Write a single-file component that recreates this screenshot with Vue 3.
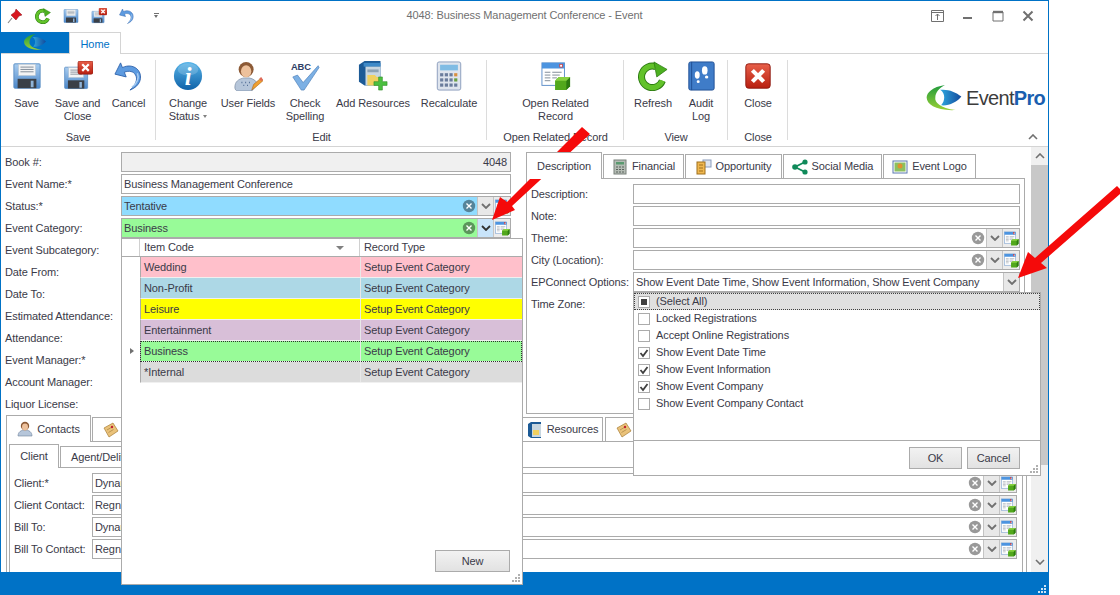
<template>
  <div class="app">
    <svg class="sprite" aria-hidden="true">
      <defs>
        <linearGradient id="gBlue" x1="0" y1="0" x2="0" y2="1"><stop offset="0" stop-color="#a9cdf0" /><stop offset="1" stop-color="#4a86c8" /></linearGradient>
        <linearGradient id="gInfo" x1="0" y1="0" x2="0" y2="1"><stop offset="0" stop-color="#58b4e8" /><stop offset="1" stop-color="#0f62a8" /></linearGradient>
        <linearGradient id="gGreen" x1="0" y1="0" x2="0" y2="1"><stop offset="0" stop-color="#1f9a3c" /><stop offset="1" stop-color="#9ad035" /></linearGradient>
        <linearGradient id="gLens" x1="0" y1="0" x2="1" y2="0"><stop offset="0" stop-color="#2fa8e0" /><stop offset="1" stop-color="#124a9c" /></linearGradient>
        <linearGradient id="gRed" x1="0" y1="0" x2="0" y2="1"><stop offset="0" stop-color="#e8604a" /><stop offset="1" stop-color="#b81f10" /></linearGradient>
      </defs>
      <symbol id="i-save" viewBox="0 0 32 32">
        <path d="M3 3h26a1 1 0 0 1 1 1v24a1 1 0 0 1-1 1H3a1 1 0 0 1-1-1V4a1 1 0 0 1 1-1z" fill="url(#gBlue)" stroke="#5b8fc4" />
        <rect x="7" y="3.500" width="18" height="12" fill="#f4f4f4" stroke="#b8c4d0" stroke-width=".6" />
        <path d="M9 6.500h14M9 9h14M9 11.500h14" stroke="#7c8894" />
        <rect x="6" y="19" width="20" height="10" fill="#3a3f46" />
        <rect x="20" y="21" width="3" height="7" fill="#8fb4d8" />
      </symbol>
      <symbol id="i-save-x" viewBox="0 0 32 32">
        <use href="#i-save" width="28" height="28" y="4" />
        <rect x="16" y="0" width="16" height="14" rx="2" fill="url(#gRed)" stroke="#8e1a10" stroke-width=".7" />
        <path d="M20.500 3.500l7 7M27.500 3.500l-7 7" stroke="#fff" stroke-width="2.400" />
      </symbol>
      <symbol id="i-undo" viewBox="0 0 32 32">
        <path d="M17 31C28 27 31 17 26 10 22 5 15 4 9 7L7 2 1 14l12 3-2-5c5-2 10-1 12 3 3 5-1 12-6 16z" fill="#5d9be0" stroke="#2a5ea8" stroke-width=".9" />
        <path d="M19 28c6-4 8-10 6-15" stroke="#a9cdf2" stroke-width="1.600" fill="none" />
      </symbol>
      <symbol id="i-refresh" viewBox="0 0 32 32">
        <path d="M26 21A11.500 11.500 0 1 1 19 6" fill="none" stroke="#2c7a12" stroke-width="7.500" />
        <path d="M26 21A11.500 11.500 0 1 1 19 6" fill="none" stroke="#62c22a" stroke-width="5.500" />
        <path d="M17 1l14 8-11 8z" fill="#4cb020" stroke="#2c7a12" stroke-width=".8" />
      </symbol>
      <symbol id="i-info" viewBox="0 0 32 32">
        <circle cx="16" cy="16" r="15" fill="url(#gInfo)" />
        <ellipse cx="16" cy="9" rx="11" ry="6.500" fill="#fff" opacity=".18" />
      </symbol>
      <symbol id="i-user" viewBox="0 0 32 32">
        <path d="M2 28c0-6 4-9 10-10h5c5 1 8 3 9 7l-6 7H5c-2 0-3-2-3-4z" fill="#b6c6da" stroke="#71839c" stroke-width=".7" />
        <circle cx="14" cy="9" r="8" fill="#8c5a36" />
        <ellipse cx="14" cy="11" rx="5.500" ry="6.500" fill="#edc19c" />
        <path d="M9 23h1M13 23h1M17 23h1M11 26h1M15 26h1" stroke="#4e6a92" stroke-width="1.500" />
        <path d="M20 31l2-6 8-7 2 3-8 7z" fill="#f0a030" stroke="#a86418" stroke-width=".6" />
        <path d="M28 19l2-2 2 3-2 1.500z" fill="#e06a5a" />
      </symbol>
      <symbol id="i-spell" viewBox="0 0 32 32">
        <path d="M3 17l5-2 6 8L30 5l1 2-16 24h-3z" fill="#7cb0e4" stroke="#4d7fb8" stroke-width=".7" />
      </symbol>
      <symbol id="i-res" viewBox="0 0 32 32">
        <path d="M1 4l6-4h17v26H7l-6-4z" fill="#1c5a96" />
        <path d="M6 2h18v4H6z" fill="#3e8ac8" />
        <rect x="8" y="6" width="16" height="20" fill="#c8d6e0" />
        <rect x="10" y="9" width="12" height="3" fill="#8ca2b4" />
        <path d="M10 15h8l2 2h3v9H10z" fill="#f0d060" />
        <path d="M22 17h4v5h5v4h-5v5h-4v-5h-5v-4h5z" fill="#4cc040" stroke="#2a8a22" stroke-width=".6" />
      </symbol>
      <symbol id="i-calc" viewBox="0 0 32 32">
        <rect x="3.500" y="1" width="25" height="30" rx="2" fill="#dfe5ee" stroke="#8a9cbc" />
        <rect x="6.500" y="4" width="19" height="6" fill="#80bce4" />
        <rect v-for="k in calcKeys" :key="k.id" :x="k.x" :y="k.y" width="3.400" height="3.400" :fill="k.fill" />
      </symbol>
      <symbol id="i-open" viewBox="0 0 32 32">
        <rect x="1" y="2" width="24" height="24" fill="#fff" stroke="#5a8cc8" />
        <rect x="1" y="2" width="24" height="6" fill="#4c94e0" />
        <rect x="20" y="3.500" width="3" height="3" fill="#fff" stroke="#d03030" stroke-width=".8" />
        <path d="M4 12h6M12 12h10M4 15h6M12 15h8M4 18h6M12 18h5M4 21h6" stroke="#7c8894" />
        <path d="M15 21l4-4h12v10l-4 4H15z" fill="#52a81c" />
        <path d="M27 21v10l4-4V17z" fill="#2c7a10" />
        <path d="M15 21l4-4h12l-4 4z" fill="#86d040" />
      </symbol>
      <symbol id="i-book" viewBox="0 0 32 32">
        <rect x="3" y="1" width="27" height="30" rx="2" fill="#3f7cc8" stroke="#1f4f94" />
        <path d="M6 1v30" stroke="#1f4f94" />
        <ellipse cx="20" cy="10" rx="3" ry="4.500" fill="#fff" />
        <ellipse cx="12" cy="15" rx="2.600" ry="4" fill="#fff" />
        <ellipse cx="22" cy="17" rx="1.800" ry="1.600" fill="#fff" />
        <ellipse cx="13" cy="22" rx="1.600" ry="1.500" fill="#fff" />
      </symbol>
      <symbol id="i-close" viewBox="0 0 32 32">
        <rect x="3" y="3" width="26" height="26" rx="3" fill="url(#gRed)" stroke="#8e1a10" />
        <path d="M10 10l12 12M22 10L10 22" stroke="#fff" stroke-width="4.500" />
      </symbol>
      <symbol id="i-swoosh" viewBox="0 0 36 28">
        <path d="M19 0C6 2 0 8 0 13c0 7 10 14 30 13C14 24 8 18 9 13 9 8 13 3 19 0z" fill="url(#gGreen)" />
        <path d="M14 5c8-1 16 2 22 7-4 6-14 10-21 9 4-4 5-12-1-16z" fill="url(#gLens)" />
      </symbol>
      <symbol id="i-pin" viewBox="0 0 16 16">
        <path d="M9 1l6 6-3 1-3 4-5-5 4-3z" fill="#d81820" stroke="#90101a" stroke-width=".5" />
        <path d="M5 10l-4 5" stroke="#8a8a8a" stroke-width="1.200" />
      </symbol>
      <symbol id="i-note" viewBox="0 0 16 16">
        <path d="M1 6l9-5 5 8-9 6z" fill="#eac27a" stroke="#a87c34" stroke-width=".7" />
        <path d="M4 8l5-3M5.500 10.500l5-3" stroke="#b08a48" stroke-width=".8" />
        <circle cx="9" cy="5" r="1.200" fill="#c02030" />
      </symbol>
      <symbol id="i-fin" viewBox="0 0 16 16">
        <rect x="2" y="1" width="12" height="14" fill="#b4bcb4" stroke="#78807a" />
        <rect x="4" y="3" width="8" height="2.500" fill="#5a9a70" />
        <path d="M4 8h2M7 8h2M10 8h2M4 10.500h2M7 10.500h2M10 10.500h2M4 13h2M7 13h2M10 13h2" stroke="#5a625c" />
      </symbol>
      <symbol id="i-opp" viewBox="0 0 16 16">
        <rect x="7" y="1" width="8" height="7" fill="#dfe5ee" stroke="#8a9cbc" />
        <rect x="1" y="3" width="8" height="12" fill="#f0b850" stroke="#a0701c" />
        <path d="M3 6h4M3 9h4M3 12h4" stroke="#a0701c" />
      </symbol>
      <symbol id="i-share" viewBox="0 0 16 16">
        <path d="M13 3L3 8l10 5" fill="none" stroke="#0f8a5a" stroke-width="1.800" />
        <circle cx="13" cy="3" r="2.600" fill="#0f8a5a" />
        <circle cx="3" cy="8" r="2.800" fill="#0f8a5a" />
        <circle cx="13" cy="13" r="2.600" fill="#0f8a5a" />
      </symbol>
      <symbol id="i-pic" viewBox="0 0 16 16">
        <rect x="1" y="2" width="14" height="12" fill="#fff" stroke="#5a78b0" />
        <rect x="2.500" y="3.500" width="11" height="9" fill="#8cc060" />
        <circle cx="8" cy="7" r="2.500" fill="#e09030" />
      </symbol>
      <symbol id="i-contact" viewBox="0 0 16 16">
        <path d="M1 15c0-4 3-6 7-6s7 2 7 6z" fill="#b6c6da" stroke="#71839c" stroke-width=".6" />
        <circle cx="8" cy="5" r="4.200" fill="#8c5a36" />
        <ellipse cx="8" cy="6" rx="3" ry="3.400" fill="#edc19c" />
      </symbol>
      <symbol id="i-resmall" viewBox="0 0 16 16">
        <path d="M1 2l3-2h10v16H4l-3-2z" fill="#1c5a96" />
        <rect x="5" y="2" width="9" height="13" fill="#c8d6e0" />
        <path d="M6 8h6v5H6z" fill="#f0d060" />
      </symbol>
      <symbol id="i-clear" viewBox="0 0 14 14">
        <circle cx="7" cy="7" r="6.200" fill="#000" fill-opacity=".4" />
        <path d="M4.500 4.500l5 5M9.500 4.500l-5 5" stroke="#fff" stroke-width="1.400" />
      </symbol>
      <symbol id="i-grip" viewBox="0 0 9 9">
        <path d="M6 0h2v2H6zM3 3h2v2H3zM6 3h2v2H6zM0 6h2v2H0zM3 6h2v2H3zM6 6h2v2H6z" fill="currentColor" />
      </symbol>
    </svg>

    <div class="window">
      <header class="titlebar">
        <div class="quick">
          <button class="qbtn"><svg class="ic16"><use href="#i-pin" /></svg></button>
          <button class="qbtn"><svg class="ic16"><use href="#i-refresh" /></svg></button>
          <button class="qbtn"><svg class="ic16"><use href="#i-save" /></svg></button>
          <button class="qbtn"><svg class="ic16"><use href="#i-save-x" /></svg></button>
          <button class="qbtn"><svg class="ic16"><use href="#i-undo" /></svg></button>
          <span class="qmore"></span>
        </div>
        <div class="title">4048: Business Management Conference - Event</div>
        <div class="winbtns">
          <svg class="wbtn" viewBox="0 0 14 14"><path d="M.5 1.500h12v11H.5zM.5 3.500h12M6.500 11V5M4.500 7l2-2 2 2" fill="none" stroke="#707070" /></svg>
          <svg class="wbtn" viewBox="0 0 14 14"><path d="M2 9h9" stroke="#707070" stroke-width="2" /></svg>
          <svg class="wbtn" viewBox="0 0 14 14"><path d="M2 3h10v9H2z" fill="none" stroke="#707070" /><path d="M2 3h10" stroke="#707070" stroke-width="2.400" /></svg>
          <svg class="wbtn" viewBox="0 0 14 14"><path d="M2.500 2.500l9 9M11.500 2.500l-9 9" stroke="#707070" stroke-width="2" /></svg>
        </div>
      </header>

      <nav class="tabrow">
        <div class="filetab"><svg class="filelogo"><use href="#i-swoosh" /></svg></div>
        <div class="hometab">Home</div>
      </nav>

      <section class="ribbon">
        <div v-for="g in ribbon" :key="g.label" class="rgroup" :class="g.cls">
          <div class="ritems">
            <div v-for="it in g.items" :key="it.text" class="ritem">
              <svg class="ric" viewBox="0 0 32 32">
                <use :href="'#' + it.icon" width="32" height="32" />
                <text v-if="it.icon === 'i-info'" class="info-i" x="16" y="26" text-anchor="middle">i</text>
                <text v-if="it.icon === 'i-spell'" class="spell-abc" x="1" y="10">ABC</text>
              </svg>
              <span class="rtext">{{ it.text }}<i v-if="it.caret" class="caret"></i></span>
            </div>
          </div>
          <div class="rlabel">{{ g.label }}</div>
        </div>
        <div class="rright">
          <div class="logo">
            <svg class="logomark"><use href="#i-swoosh" /></svg>
            <span class="logotext">Event<b>Pro</b></span>
          </div>
          <svg class="collapse" viewBox="0 0 10 6"><path d="M1 5l4-4 4 4" fill="none" stroke="#707070" stroke-width="1.600" /></svg>
        </div>
      </section>

      <main class="content">
        <div class="scrollarea">
          <div class="toppart">
            <div class="form">
              <div v-for="r in leftRows" :key="r.label" class="row">
                <label class="lbl leftlbl">{{ r.label }}</label>
                <div class="field" :class="r.cls">
                  <span class="val">{{ r.value }}</span>
                  <template v-if="r.combo">
                    <svg class="clear"><use href="#i-clear" /></svg>
                    <span class="cbtn" :class="{ hot: r.hot }"><svg class="chev" viewBox="0 0 10 6"><path d="M1 1l4 4 4-4" fill="none" stroke-width="1.800" /></svg></span>
                    <span class="abtn"><svg class="ic16"><use href="#i-open" /></svg></span>
                  </template>
                </div>
              </div>
            </div>
            <div class="rightpane">
              <div class="tabs">
                <div v-for="t in topTabs" :key="t.text" class="tab" :class="[t.cls, { active: t.active }]">
                  <svg v-if="t.icon" class="ic16"><use :href="'#' + t.icon" /></svg>
                  {{ t.text }}
                </div>
              </div>
              <div class="rpanel">
                <div v-for="r in rightRows" :key="r.label" class="row">
                  <label class="lbl rightlbl">{{ r.label }}</label>
                  <div v-if="r.label !== 'Time Zone:'" class="field">
                    <span class="val">{{ r.value }}</span>
                    <svg v-if="r.combo" class="clear"><use href="#i-clear" /></svg>
                    <span v-if="r.combo || r.drop" class="cbtn"><svg class="chev" viewBox="0 0 10 6"><path d="M1 1l4 4 4-4" fill="none" stroke-width="1.800" /></svg></span>
                    <span v-if="r.combo" class="abtn"><svg class="ic16"><use href="#i-open" /></svg></span>
                  </div>
                </div>
              </div>
            </div>
          </div>

          <div class="lower">
            <div class="lowertabs">
              <div class="tab active ltab-contacts"><svg class="ic16"><use href="#i-contact" /></svg>Contacts</div>
              <div class="tab ltab-note"><svg class="ic16"><use href="#i-note" /></svg></div>
              <div class="tab ltab-res"><svg class="ic16"><use href="#i-resmall" /></svg>Resources</div>
              <div class="tab ltab-note2"><svg class="ic16"><use href="#i-note" /></svg></div>
            </div>
            <div class="lowerpanel">
              <div class="subtabs">
                <div class="tab active stab-client">Client</div>
                <div class="tab stab-agent">Agent/Delivery</div>
              </div>
              <div class="subpanel">
                <div v-for="r in contactRows" :key="r.label" class="row">
                  <label class="lbl contactlbl">{{ r.label }}</label>
                  <div class="field">
                    <span class="val">{{ r.value }}</span>
                    <svg class="clear"><use href="#i-clear" /></svg>
                    <span class="cbtn"><svg class="chev" viewBox="0 0 10 6"><path d="M1 1l4 4 4-4" fill="none" stroke-width="1.800" /></svg></span>
                    <span class="abtn"><svg class="ic16"><use href="#i-open" /></svg></span>
                  </div>
                </div>
              </div>
            </div>
          </div>
        </div>
        <div class="scrollbar">
          <svg class="sarrow" viewBox="0 0 10 6"><path d="M1 5l4-4 4 4" fill="none" stroke="#707070" stroke-width="1.600" /></svg>
          <div class="thumb"></div>
          <svg class="sarrow bottom" viewBox="0 0 10 6"><path d="M1 1l4 4 4-4" fill="none" stroke="#707070" stroke-width="1.600" /></svg>
        </div>
      </main>

      <footer class="statusbar"><svg class="grip light"><use href="#i-grip" /></svg></footer>
    </div>

    <!-- category lookup -->
    <div class="popup catpopup">
      <div class="gridhead">
        <div class="gind"></div>
        <div class="gcol1">Item Code<i class="sortmark"></i></div>
        <div class="gcol2">Record Type</div>
      </div>
      <div v-for="c in categories" :key="c.name" class="grow" :class="{ current: c.current }">
        <div class="gind"><i v-if="c.current" class="rowmark"></i></div>
        <div class="gcells" :class="c.cls">
          <div class="gcol1">{{ c.name }}</div>
          <div class="gcol2">Setup Event Category</div>
        </div>
      </div>
      <div class="catfoot"><button class="btn newbtn">New</button></div>
      <svg class="grip"><use href="#i-grip" /></svg>
    </div>

    <!-- EPConnect options -->
    <div class="popup optpopup">
      <div class="optlist">
        <div v-for="o in options" :key="o.text" class="opt" :class="{ all: o.all }">
          <span class="check" :class="{ mixed: o.all }">
            <svg v-if="o.on" viewBox="0 0 12 12"><path d="M2.500 6l2.500 3 4.500-6" fill="none" stroke="#404040" stroke-width="1.800" /></svg>
          </span>
          {{ o.text }}
        </div>
      </div>
      <div class="optfoot">
        <button class="btn okbtn">OK</button>
        <button class="btn okbtn">Cancel</button>
      </div>
      <svg class="grip"><use href="#i-grip" /></svg>
    </div>

    <svg class="arrows" viewBox="0 0 1120 595">
      <polygon points="492,220 500,197 507,202 582,127 590,134 512,206 515,210" fill="#f50a0a" />
      <polygon points="1018,278 1028,252 1035,258 1117,186 1120,189 1120,194 1041,263 1047,268" fill="#f50a0a" />
    </svg>
  </div>
</template>

<script setup>
const calcColors = ['#6a7c9c', '#6a7c9c', '#6a7c9c', '#d89040']
const calcKeys = []
for (let row = 0; row < 3; row++) {
  for (let col = 0; col < 4; col++) {
    let fill = calcColors[col]
    if (col === 3 && row === 1) fill = '#6aa040'
    if (col === 3 && row === 2) fill = '#6a7c9c'
    calcKeys.push({ id: row + '-' + col, x: 6.5 + col * 5, y: 13 + row * 5.5, fill })
  }
}

const ribbon = [
  {
    label: 'Save', cls: 'g-save',
    items: [
      { text: 'Save', icon: 'i-save' },
      { text: 'Save and Close', icon: 'i-save-x' },
      { text: 'Cancel', icon: 'i-undo' }
    ]
  },
  {
    label: 'Edit', cls: 'g-edit',
    items: [
      { text: 'Change Status', icon: 'i-info', caret: true },
      { text: 'User Fields', icon: 'i-user' },
      { text: 'Check Spelling', icon: 'i-spell' },
      { text: 'Add Resources', icon: 'i-res' },
      { text: 'Recalculate', icon: 'i-calc' }
    ]
  },
  {
    label: 'Open Related Record', cls: 'g-open',
    items: [{ text: 'Open Related Record', icon: 'i-open' }]
  },
  {
    label: 'View', cls: 'g-view',
    items: [
      { text: 'Refresh', icon: 'i-refresh' },
      { text: 'Audit Log', icon: 'i-book' }
    ]
  },
  {
    label: 'Close', cls: 'g-close',
    items: [{ text: 'Close', icon: 'i-close' }]
  }
]

const leftRows = [
  { label: 'Book #:', value: '4048', cls: 'readonly' },
  { label: 'Event Name:*', value: 'Business Management Conference' },
  { label: 'Status:*', value: 'Tentative', cls: 'tentative', combo: true },
  { label: 'Event Category:', value: 'Business', cls: 'business', combo: true, hot: true },
  { label: 'Event Subcategory:', value: '', combo: true },
  { label: 'Date From:', value: '' },
  { label: 'Date To:', value: '' },
  { label: 'Estimated Attendance:', value: '' },
  { label: 'Attendance:', value: '' },
  { label: 'Event Manager:*', value: '', combo: true },
  { label: 'Account Manager:', value: '', combo: true },
  { label: 'Liquor License:', value: '' }
]

const topTabs = [
  { text: 'Description', active: true, cls: 'tt-desc' },
  { text: 'Financial', icon: 'i-fin', cls: 'tt-fin' },
  { text: 'Opportunity', icon: 'i-opp', cls: 'tt-opp' },
  { text: 'Social Media', icon: 'i-share', cls: 'tt-soc' },
  { text: 'Event Logo', icon: 'i-pic', cls: 'tt-logo' }
]

const rightRows = [
  { label: 'Description:', value: '' },
  { label: 'Note:', value: '' },
  { label: 'Theme:', value: '', combo: true },
  { label: 'City (Location):', value: '', combo: true },
  { label: 'EPConnect Options:', value: 'Show Event Date Time, Show Event Information, Show Event Company', drop: true },
  { label: 'Time Zone:', value: '' }
]

const contactRows = [
  { label: 'Client:*', value: 'Dynamic Solutions' },
  { label: 'Client Contact:', value: 'Regnier' },
  { label: 'Bill To:', value: 'Dynamic Solutions' },
  { label: 'Bill To Contact:', value: 'Regnier' }
]

const categories = [
  { name: 'Wedding', cls: 'c-pink' },
  { name: 'Non-Profit', cls: 'c-blue' },
  { name: 'Leisure', cls: 'c-yellow' },
  { name: 'Entertainment', cls: 'c-thistle' },
  { name: 'Business', cls: 'c-green', current: true },
  { name: '*Internal', cls: 'c-grey' }
]

const options = [
  { text: '(Select All)', all: true },
  { text: 'Locked Registrations' },
  { text: 'Accept Online Registrations' },
  { text: 'Show Event Date Time', on: true },
  { text: 'Show Event Information', on: true },
  { text: 'Show Event Company', on: true },
  { text: 'Show Event Company Contact' }
]
</script>

<style>
html, body { margin: 0; background: #fff; }
</style>

<style scoped>
.app {
  position: relative;
  width: 1120px;
  height: 595px;
  overflow: hidden;
  font-family: "Liberation Sans", sans-serif;
  font-size: 11px;
  letter-spacing: -0.1px;
  line-height: 13px;
  color: #3a3a48;
  background: #fff;
}
.sprite { position: absolute; width: 0; height: 0; }
.ic16 { width: 16px; height: 16px; flex: none; }

.window {
  width: 1049px;
  height: 595px;
  box-sizing: border-box;
  border: 1px solid #0072c6;
  border-bottom: 0;
  display: flex;
  flex-direction: column;
}

.titlebar {
  height: 31px;
  padding-bottom: 2px;
  box-sizing: border-box;
  display: grid;
  grid-template-columns: 1fr auto 1fr;
  align-items: center;
  flex: none;
}
.quick { display: flex; align-items: center; }
.qbtn {
  width: 28px;
  height: 20px;
  padding: 0;
  border: 0;
  background: none;
  display: flex;
  align-items: center;
  justify-content: center;
}
.qmore {
  width: 5px;
  height: 4px;
  margin-left: 13px;
  border-top: 1px solid #707070;
  position: relative;
}
.qmore::after {
  content: "";
  position: absolute;
  top: 1px;
  left: 0;
  border: 2.5px solid transparent;
  border-top: 3px solid #707070;
}
.title { color: #707070; }
.winbtns { display: flex; justify-content: flex-end; padding-right: 12px; gap: 14px; }
.wbtn { width: 14px; height: 14px; margin: 0 1px; }

.tabrow {
  height: 22px;
  flex: none;
  display: flex;
  box-sizing: border-box;
  border-bottom: 1px solid #d4d4d4;
}
.filetab {
  width: 68px;
  height: 21px;
  background: #0072c6;
  display: flex;
  align-items: center;
  justify-content: center;
}
.filelogo { width: 22px; height: 17px; }
.hometab {
  width: 52px;
  height: 22px;
  box-sizing: border-box;
  border: 1px solid #d4d4d4;
  border-bottom: 0;
  background: #fff;
  color: #0072c6;
  font-size: 11px;
  line-height: 23px;
  text-align: center;
}

.ribbon {
  height: 93px;
  flex: none;
  box-sizing: border-box;
  border-bottom: 1px solid #d4d4d4;
  padding-top: 6px;
  display: flex;
  align-items: flex-start;
}
.rgroup {
  height: 80px;
  border-right: 1px solid #dcdcdc;
  display: flex;
  flex-direction: column;
  box-sizing: border-box;
  margin-right: 1px;
}
.ritems { display: grid; height: 70px; flex: none; }
.g-save { width: 155px; }
.g-save .ritems { grid-template-columns: repeat(3, 51px); }
.g-edit { width: 330px; }
.g-edit .ritems { grid-template-columns: 62px 58px 56px 80px 72px; }
.g-open { width: 136px; }
.g-open .ritems { grid-template-columns: 1fr; }
.g-open .rtext { width: 80px; }
.g-view { width: 103px; }
.g-view .ritems { grid-template-columns: 56px 40px; }
.g-close { width: 59px; }
.g-close .ritems { grid-template-columns: 1fr; }
.ritem { display: flex; flex-direction: column; align-items: center; text-align: center; }
.ric { width: 30px; height: 30px; margin: 1px 0 6px; flex: none; }
.info-i { font-family: "Liberation Serif", serif; font-style: italic; font-weight: 700; font-size: 26px; fill: #fff; }
.spell-abc { font-family: "Liberation Sans", sans-serif; font-weight: 700; font-size: 10px; fill: #2e3e66; }
.caret {
  display: inline-block;
  margin-left: 4px;
  vertical-align: 2px;
  border: 2.5px solid transparent;
  border-top: 3px solid #808080;
  border-bottom: 0;
}
.rlabel { text-align: center; line-height: 14px; }
.rright {
  flex: 1;
  height: 84px;
  display: flex;
  flex-direction: column;
  align-items: flex-end;
}
.logo { display: flex; align-items: center; margin-top: 25px; margin-right: 3px; }
.logomark { width: 36px; height: 27px; }
.logotext {
  font-size: 20px;
  line-height: 27px;
  letter-spacing: -0.7px;
  color: #3c3c3c;
  margin-left: 4px;
}
.logotext b { color: #1a5fb0; }
.collapse { width: 10px; height: 6px; margin: 22px 10px 0 0; }

.content { flex: 1; display: flex; min-height: 0; }
.scrollarea { flex: 1; min-width: 0; display: flex; flex-direction: column; overflow: hidden; }
.toppart { display: flex; flex: none; }
.form {
  width: 525px;
  box-sizing: border-box;
  padding: 5px 15px 0 4px;
  display: flex;
  flex-direction: column;
  gap: 2px;
}
.row { display: flex; align-items: center; height: 20px; flex: none; }
.lbl { flex: none; white-space: nowrap; }
.leftlbl { width: 116px; }
.rightlbl { width: 102px; }
.contactlbl { width: 78px; }
.field {
  flex: 1;
  min-width: 0;
  height: 20px;
  box-sizing: border-box;
  border: 1px solid #ababab;
  background: #fff;
  display: flex;
  align-items: center;
}
.val { flex: 1; min-width: 0; padding-left: 2px; white-space: nowrap; overflow: hidden; }
.readonly { background: #f0f0f0; }
.readonly .val { text-align: right; padding-right: 3px; }
.tentative { background: #90dcff; }
.business { background: #98fb98; }
.clear { width: 14px; height: 14px; flex: none; margin-right: 1px; }
.cbtn {
  width: 15px;
  height: 18px;
  flex: none;
  background: #e8e8e8;
  border-left: 1px solid #c4c4c4;
  display: flex;
  align-items: center;
  justify-content: center;
}
.cbtn.hot { background: #c8e4fa; }
.chev { width: 10px; height: 6px; stroke: #707070; }
.hot .chev { stroke: #303030; }
.abtn {
  width: 16px;
  height: 18px;
  flex: none;
  background: #ececec;
  border-left: 1px solid #c4c4c4;
  display: flex;
  align-items: center;
  justify-content: center;
}
.abtn .ic16 { width: 15px; height: 15px; }

.rightpane { width: 499px; margin: 5px 0 0 0; }
.tabs { display: flex; align-items: flex-end; height: 26px; }
.tab {
  box-sizing: border-box;
  height: 24px;
  border: 1px solid #ababab;
  border-bottom: 0;
  display: flex;
  align-items: center;
  justify-content: center;
  gap: 4px;
  white-space: nowrap;
  background: #fff;
  margin-right: 1px;
  flex: none;
}
.tab.active { height: 27px; margin-bottom: -1px; position: relative; z-index: 1; }
.tt-desc { width: 76px; }
.tt-fin { width: 81px; }
.tt-opp { width: 97px; }
.tt-soc { width: 99px; }
.tt-logo { width: 93px; }
.rpanel {
  height: 236px;
  box-sizing: border-box;
  border: 1px solid #ababab;
  padding: 5px 4px 0 4px;
  display: flex;
  flex-direction: column;
  gap: 2px;
}

.lower { flex: 1; min-height: 0; margin-left: 5px; width: 1021px; display: flex; flex-direction: column; }
.lowertabs { display: flex; align-items: flex-end; height: 26px; margin-top: 1px; flex: none; }
.ltab-contacts { width: 85px; }
.ltab-note { width: 60px; margin-right: 370px; justify-content: flex-start; padding-left: 10px; }
.ltab-res { width: 81px; margin-right: 2px; }
.ltab-note2 { width: 30px; justify-content: flex-start; padding-left: 10px; }
.lowerpanel {
  flex: 1;
  min-height: 0;
  box-sizing: border-box;
  border: 1px solid #ababab;
  border-bottom: 0;
  padding: 1px 3px 0 2px;
  display: flex;
  flex-direction: column;
}
.subtabs { display: flex; align-items: flex-end; height: 24px; flex: none; }
.subtabs .tab { height: 21px; }
.subtabs .tab.active { height: 24px; }
.stab-client { width: 50px; }
.stab-agent { width: 90px; justify-content: flex-start; padding-left: 10px; }
.subpanel {
  flex: 1;
  box-sizing: border-box;
  border: 1px solid #ababab;
  border-bottom: 0;
  padding: 5px 5px 0 4px;
  display: flex;
  flex-direction: column;
  gap: 2px;
}

.scrollbar {
  width: 17px;
  flex: none;
  background: #f0f0f0;
  display: flex;
  flex-direction: column;
  align-items: center;
}
.sarrow { width: 10px; height: 6px; margin: 6px 0; flex: none; }
.thumb { width: 100%; height: 300px; background: #c8c8c8; flex: none; }
.sarrow.bottom { margin-top: auto; margin-bottom: 7px; }

.statusbar {
  height: 23px;
  flex: none;
  background: #0072c6;
  position: relative;
}
.grip {
  position: absolute;
  right: 1px;
  bottom: 1px;
  width: 9px;
  height: 9px;
  color: #b0b0b0;
}
.grip.light { color: #cfe4f4; }

.popup {
  position: absolute;
  box-sizing: border-box;
  border: 1px solid #ababab;
  background: #fff;
}
.catpopup { left: 121px; top: 238px; width: 402px; height: 347px; display: flex; flex-direction: column; }
.gridhead { display: flex; height: 18px; box-sizing: border-box; border-bottom: 1px solid #ababab; flex: none; align-items: center; }
.gridhead .gcol1, .gridhead .gcol2 { padding-left: 4px; }
.gind { width: 18px; height: 100%; flex: none; position: relative; }
.gridhead .gind { border-right: 1px solid #d0d0d0; box-sizing: border-box; }
.gridhead .gcol1 { border-right: 1px solid #d0d0d0; height: 100%; line-height: 17px; position: relative; }
.gcol1 { width: 220px; box-sizing: border-box; padding-left: 3px; flex: none; }
.gcol2 { flex: 1; padding-left: 3px; }
.sortmark {
  position: absolute;
  right: 15px;
  top: 7px;
  border: 4px solid transparent;
  border-top: 4px solid #808080;
  border-bottom: 0;
}
.grow { display: flex; height: 21px; flex: none; }
.gcells { flex: 1; display: flex; align-items: center; border-bottom: 1px solid #f0f0f0; border-left: 1px solid #ababab; box-sizing: border-box; }
.gcells .gcol1 { border-right: 1px solid #e8e8e8; height: 100%; line-height: 20px; }
.c-pink { background: #ffc0cb; }
.c-blue { background: #add8e6; }
.c-yellow { background: #ffff00; }
.c-thistle { background: #d8bfd8; }
.c-green { background: #98fb98; outline: 1px dotted #303030; outline-offset: -1px; }
.c-grey { background: #dcdcdc; }
.rowmark {
  position: absolute;
  left: 8px;
  top: 7px;
  border: 3.5px solid transparent;
  border-left: 4px solid #707070;
  border-right: 0;
}
.catfoot { margin-top: auto; display: flex; justify-content: flex-end; padding: 0 12px 12px 0; }
.btn {
  font: inherit;
  letter-spacing: inherit;
  color: inherit;
  height: 22px;
  box-sizing: border-box;
  border: 1px solid #ababab;
  background: linear-gradient(#f2f2f2, #e2e2e2);
  padding: 0;
}
.newbtn { width: 75px; }

.optpopup { left: 633px; top: 292px; width: 408px; height: 184px; display: flex; flex-direction: column; }
.optlist { height: 148px; border-bottom: 1px solid #ababab; box-sizing: border-box; flex: none; }
.opt { height: 17px; display: flex; align-items: center; padding-left: 4px; gap: 6px; }
.opt.all { background: #e0e0e0; outline: 1px dotted #404040; outline-offset: -1px; }
.check {
  width: 12px;
  height: 12px;
  box-sizing: border-box;
  border: 1px solid #ababab;
  background: #fff;
  position: relative;
  flex: none;
}
.check svg { position: absolute; left: -1px; top: -1px; width: 12px; height: 12px; }
.check.mixed::after {
  content: "";
  position: absolute;
  left: 2px;
  top: 2px;
  width: 6px;
  height: 6px;
  background: #404040;
}
.optfoot { display: flex; justify-content: flex-end; gap: 5px; padding: 6px 20px 0 0; }
.okbtn { width: 53px; }

.arrows { position: absolute; left: 0; top: 0; width: 1120px; height: 595px; pointer-events: none; }
</style>
